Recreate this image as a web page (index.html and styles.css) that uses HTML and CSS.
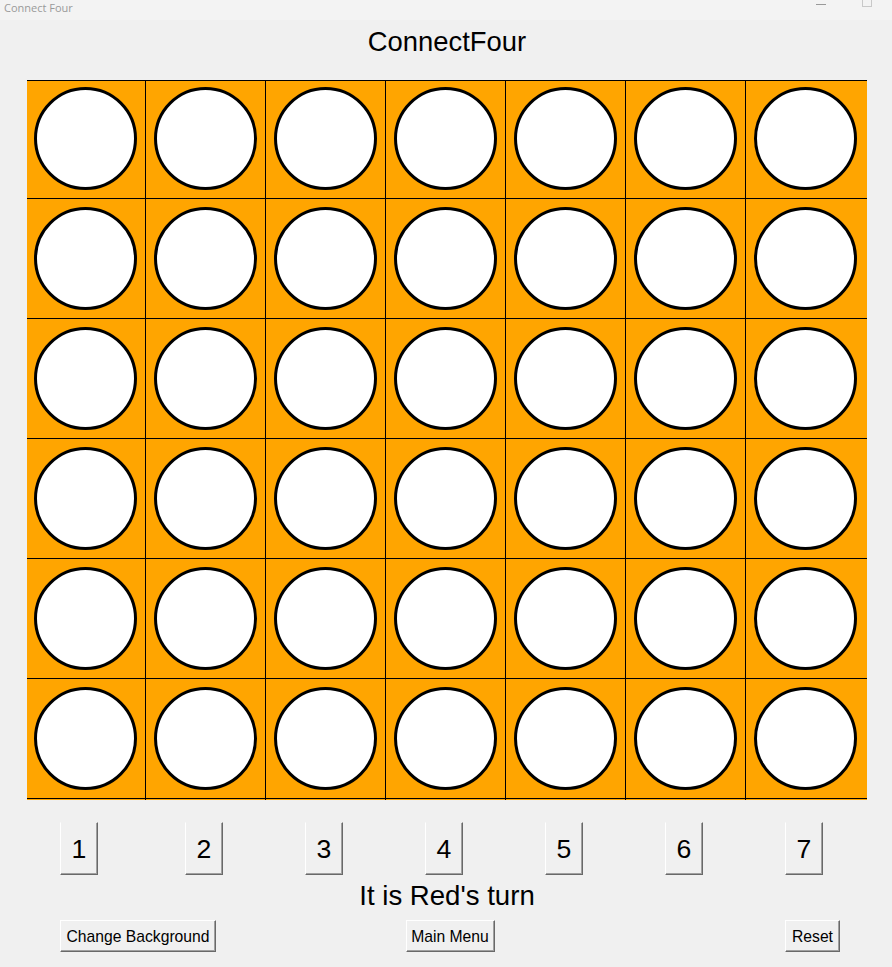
FILE: index.html
```html
<!DOCTYPE html>
<html>
<head>
<meta charset="utf-8">
<title>Connect Four</title>
<link rel="stylesheet" href="styles.css">
</head>
<body>
<div class="titlebar">
  <span class="titlebar-text">Connect Four</span>
  <span class="titlebar-controls"><span class="tb-min"></span><span class="tb-max"></span></span>
</div>
<div class="title">ConnectFour</div>
<svg class="board" width="840" height="720" viewBox="0 0 840 720" xmlns="http://www.w3.org/2000/svg">
  <rect x="0" y="0" width="840" height="720" fill="#ffa500"/>
  <g stroke="#000" stroke-width="1">
    <line x1="0" y1="0.5" x2="840" y2="0.5"/>
    <line x1="0" y1="118.5" x2="840" y2="118.5"/>
    <line x1="0" y1="238.5" x2="840" y2="238.5"/>
    <line x1="0" y1="358.5" x2="840" y2="358.5"/>
    <line x1="0" y1="478.5" x2="840" y2="478.5"/>
    <line x1="0" y1="598.5" x2="840" y2="598.5"/>
    <line x1="0" y1="718.5" x2="840" y2="718.5"/>
    <line x1="118.5" y1="0" x2="118.5" y2="720"/>
    <line x1="238.5" y1="0" x2="238.5" y2="720"/>
    <line x1="358.5" y1="0" x2="358.5" y2="720"/>
    <line x1="478.5" y1="0" x2="478.5" y2="720"/>
    <line x1="598.5" y1="0" x2="598.5" y2="720"/>
    <line x1="718.5" y1="0" x2="718.5" y2="720"/>
  </g>
  <defs>
    <circle id="slot" r="50" fill="#fff" stroke="#000" stroke-width="3"/>
  </defs>
  <g>
    <use href="#slot" x="58.5" y="58.5"/><use href="#slot" x="178.5" y="58.5"/><use href="#slot" x="298.5" y="58.5"/><use href="#slot" x="418.5" y="58.5"/><use href="#slot" x="538.5" y="58.5"/><use href="#slot" x="658.5" y="58.5"/><use href="#slot" x="778.5" y="58.5"/>
    <use href="#slot" x="58.5" y="178.5"/><use href="#slot" x="178.5" y="178.5"/><use href="#slot" x="298.5" y="178.5"/><use href="#slot" x="418.5" y="178.5"/><use href="#slot" x="538.5" y="178.5"/><use href="#slot" x="658.5" y="178.5"/><use href="#slot" x="778.5" y="178.5"/>
    <use href="#slot" x="58.5" y="298.5"/><use href="#slot" x="178.5" y="298.5"/><use href="#slot" x="298.5" y="298.5"/><use href="#slot" x="418.5" y="298.5"/><use href="#slot" x="538.5" y="298.5"/><use href="#slot" x="658.5" y="298.5"/><use href="#slot" x="778.5" y="298.5"/>
    <use href="#slot" x="58.5" y="418.5"/><use href="#slot" x="178.5" y="418.5"/><use href="#slot" x="298.5" y="418.5"/><use href="#slot" x="418.5" y="418.5"/><use href="#slot" x="538.5" y="418.5"/><use href="#slot" x="658.5" y="418.5"/><use href="#slot" x="778.5" y="418.5"/>
    <use href="#slot" x="58.5" y="538.5"/><use href="#slot" x="178.5" y="538.5"/><use href="#slot" x="298.5" y="538.5"/><use href="#slot" x="418.5" y="538.5"/><use href="#slot" x="538.5" y="538.5"/><use href="#slot" x="658.5" y="538.5"/><use href="#slot" x="778.5" y="538.5"/>
    <use href="#slot" x="58.5" y="658.5"/><use href="#slot" x="178.5" y="658.5"/><use href="#slot" x="298.5" y="658.5"/><use href="#slot" x="418.5" y="658.5"/><use href="#slot" x="538.5" y="658.5"/><use href="#slot" x="658.5" y="658.5"/><use href="#slot" x="778.5" y="658.5"/>
  </g>
</svg>
<div class="col-row">
  <button class="tk-btn col-btn first">1</button>
  <button class="tk-btn col-btn">2</button>
  <button class="tk-btn col-btn">3</button>
  <button class="tk-btn col-btn">4</button>
  <button class="tk-btn col-btn">5</button>
  <button class="tk-btn col-btn">6</button>
  <button class="tk-btn col-btn">7</button>
</div>
<div class="turn">It is Red's turn</div>
<div class="bottom-row">
  <button class="tk-btn small-btn left">Change Background</button>
  <button class="tk-btn small-btn center">Main Menu</button>
  <button class="tk-btn small-btn right">Reset</button>
</div>
</body>
</html>
```
FILE: styles.css
```css
html, body {
  margin: 0;
  padding: 0;
}
body {
  background: #f0f0f0;
  font-family: "Liberation Sans", Arial, sans-serif;
  color: #000;
  width: 892px;
  height: 967px;
  overflow: hidden;
}
.titlebar {
  height: 20px;
  background: #f3f3f3;
  display: flex;
  justify-content: space-between;
  align-items: flex-start;
}
.titlebar-text {
  font-family: "Open Sans", "Noto Sans", sans-serif;
  font-size: 11px;
  color: #9a9a9a;
  line-height: 15px;
  margin-left: 4px;
}
.titlebar-controls {
  display: flex;
  align-items: flex-start;
  gap: 36px;
  margin-right: 20px;
}
.tb-min {
  width: 10px;
  height: 4px;
  border-bottom: 1px solid #999;
}
.tb-max {
  width: 8px;
  height: 6px;
  border: 1px solid #c8c8c8;
  border-top: none;
}
.title {
  height: 60px;
  line-height: 44px;
  text-align: center;
  font-size: 27.4px;
  padding-left: 2px;
}
.board {
  display: block;
  margin-left: 27px;
}
.tk-btn {
  font-family: "Liberation Sans", Arial, sans-serif;
  background: #f0f0f0;
  color: #000;
  border-style: solid;
  border-width: 1px;
  border-color: #ffffff #696969 #696969 #ffffff;
  box-shadow: inset -1px -1px 0 #a0a0a0;
  padding: 0;
  margin: 0;
  box-sizing: border-box;
  white-space: nowrap;
}
.col-row {
  display: flex;
  margin-top: 22px;
  padding-left: 60px;
  gap: 82px;
  height: 53px;
}
.col-btn {
  width: 38px;
  height: 53px;
  font-size: 26.67px;
  line-height: 50px;
  border-top-color: #f0f0f0;
}
.col-btn.first {
  margin-right: 5px;
}
.turn {
  height: 42px;
  line-height: 42px;
  text-align: center;
  font-size: 27.6px;
  padding-left: 2px;
}
.bottom-row {
  display: grid;
  grid-template-columns: 1fr auto 1fr;
  margin-top: 3px;
  padding: 0 52px 0 60px;
}
.small-btn {
  height: 32px;
  font-size: 15.7px;
  padding: 2px 0 0 0;
  text-align: center;
}
.small-btn.left {
  justify-self: start;
  width: 156px;
}
.small-btn.center {
  justify-self: center;
  width: 89px;
}
.small-btn.right {
  justify-self: end;
  width: 55px;
}
```
